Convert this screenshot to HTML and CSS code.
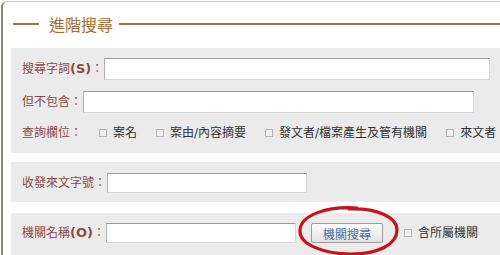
FILE: index.html
```html
<!DOCTYPE html>
<html lang="zh-Hant">
<head>
    <meta charset="UTF-8">
    <meta name="viewport" content="width=device-width, initial-scale=1.0">
    <title>進階搜尋</title>
    <link rel="stylesheet" href="styles.css">
</head>
<body>

    <div class="frame">
        <div class="frame-head">
            <span class="rule rule-short"></span>
            <h2 class="frame-title">進階搜尋</h2>
            <span class="rule rule-long"></span>
        </div>

        <div class="panel panel-main">
            <div class="row">
                <label class="label" for="keyword">搜尋字詞<b>(S)</b>：</label>
                <input class="field field-keyword" type="text" id="keyword" name="keyword">
            </div>
            <div class="row">
                <label class="label" for="exclude">但不包含：</label>
                <input class="field field-exclude" type="text" id="exclude" name="exclude">
            </div>
            <div class="row row-options">
                <span class="label label-options">查詢欄位：</span>
                <label class="option"><input type="checkbox" class="check">案名</label>
                <label class="option"><input type="checkbox" class="check">案由/內容摘要</label>
                <label class="option"><input type="checkbox" class="check">發文者/檔案產生及管有機關</label>
                <label class="option"><input type="checkbox" class="check">來文者</label>
            </div>
        </div>

        <div class="panel panel-docno">
            <div class="row">
                <label class="label" for="docno">收發來文字號：</label>
                <input class="field field-docno" type="text" id="docno" name="docno">
            </div>
        </div>

        <div class="panel panel-org">
            <div class="row">
                <label class="label" for="org">機關名稱<b>(O)</b>：</label>
                <input class="field field-org" type="text" id="org" name="org">
                <span class="btn-wrap">
                    <button type="button" class="btn">機關搜尋</button>
                    <svg class="circle-mark" width="104" height="52" viewBox="0 0 104 52">
                        <path d="M60 3 C 30 1, 4 10, 3 25 C 2 40, 28 49, 54 49 C 82 49, 100 39, 100 25 C 100 12, 80 3, 52 4"
                              fill="none" stroke="#c4131a" stroke-width="3.2" stroke-linecap="round"/>
                    </svg>
                </span>
                <label class="option option-sub"><input type="checkbox" class="check">含所屬機關</label>
            </div>
        </div>
    </div>

</body>
</html>
```

FILE: styles.css
```css
body {
    margin: 0;
    background: #fff;
    font-family: "DejaVu Sans", "Noto Sans CJK TC", sans-serif;
    font-size: 12px;
    overflow: hidden;
}

.frame {
    margin: 1px 0 0 1px;
    height: 253px;
    overflow: hidden;
    border-top: 1px solid #c4c4c4;
    border-left: 2px solid #8c857a;
    border-top-left-radius: 6px;
}

.frame-head {
    display: flex;
    align-items: center;
    height: 44px;
    padding-left: 10px;
}

.rule {
    height: 2px;
    background: #a0753a;
}

.rule-short {
    width: 26px;
    margin-right: 10px;
}

.rule-long {
    flex: 1;
    margin-left: 6px;
}

.frame-title {
    margin: 0;
    font-family: "Noto Sans CJK TC", sans-serif;
    font-size: 16px;
    font-weight: normal;
    line-height: 20px;
    color: #a06e32;
}

.panel {
    margin-left: 8px;
    background: #ebebeb;
    padding-left: 11px;
}

.panel-main {
    margin-top: 2px;
    padding-top: 10px;
    padding-bottom: 11px;
}

.panel-docno {
    margin-top: 9px;
    padding-top: 11px;
    padding-bottom: 9px;
}

.panel-org {
    margin-top: 11px;
    padding-top: 10px;
    padding-bottom: 12px;
}

.row {
    display: flex;
    align-items: center;
}

.row > * {
    flex-shrink: 0;
}

.panel-main .row + .row {
    margin-top: 11px;
}

.panel-main .row-options {
    margin-top: 10px;
    height: 18px;
}

.label {
    color: #8e4848;
    line-height: 16px;
    white-space: nowrap;
}

.label b {
    font-size: 13px;
    font-weight: bold;
}

.field {
    height: 22px;
    box-sizing: border-box;
    margin: 0 0 0 1px;
    padding: 2px 4px;
    background: #fff;
    border: 1px solid;
    border-color: #9a9a9a #d6d6d6 #d6d6d6 #b0b0b0;
}

.field-keyword {
    width: 386px;
}

.field-exclude {
    width: 391px;
}

.field-docno {
    width: 200px;
    height: 20px;
}

.field-org {
    width: 190px;
    height: 20px;
}

.label-options {
    margin-right: 17px;
}

.option {
    display: flex;
    align-items: center;
    margin-right: 19px;
    color: #333;
    line-height: 16px;
    white-space: nowrap;
}

.check {
    appearance: none;
    -webkit-appearance: none;
    width: 8px;
    height: 8px;
    margin: 0 6px 0 0;
    border: 1px solid #b4b4b4;
    background: #f2f2f2;
}

.btn-wrap {
    position: relative;
    margin-left: 15px;
    display: flex;
}

.btn {
    width: 72px;
    height: 20px;
    padding: 0;
    font-family: "Noto Sans CJK TC", sans-serif;
    font-size: 12px;
    color: #4f6fa3;
    border: 1px solid #9c9c9c;
    border-radius: 2px;
    background: linear-gradient(#fdfdfd, #e2e2e2);
}

.circle-mark {
    position: absolute;
    left: -14px;
    top: -18px;
}

.option-sub {
    margin-left: 21px;
    margin-right: 0;
}
```
